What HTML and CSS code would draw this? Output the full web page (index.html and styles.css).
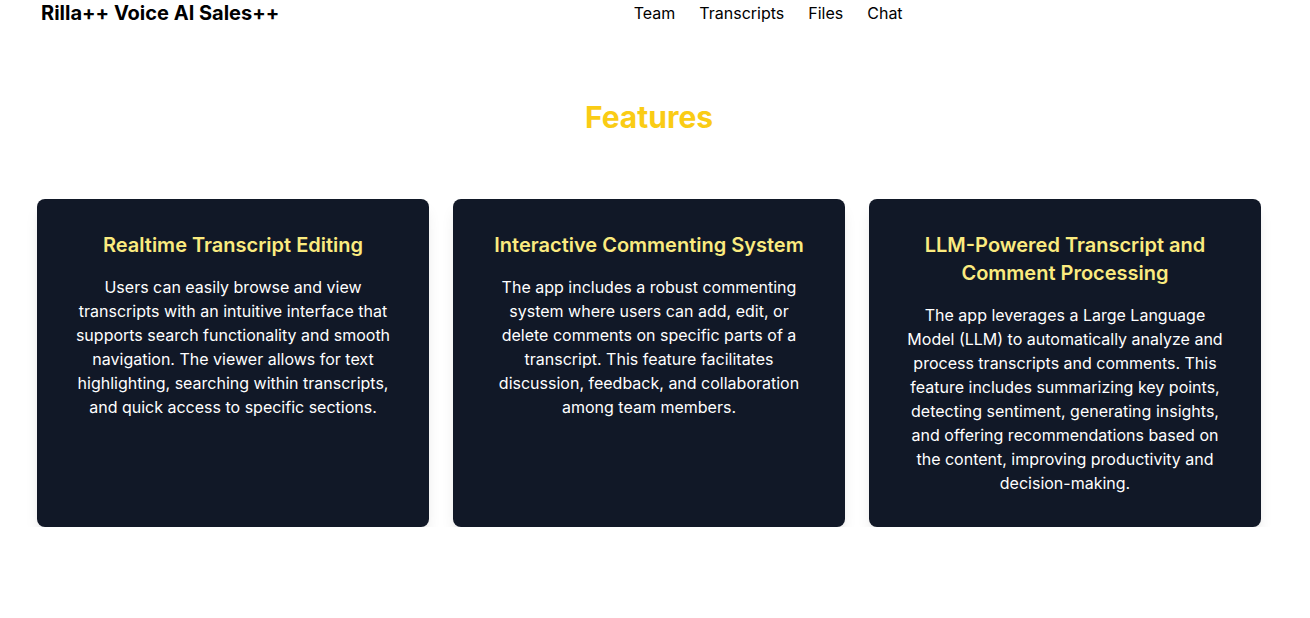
FILE: index.html
```html
<!DOCTYPE html>
<html lang="en">
<head>
<meta charset="utf-8">
<title>Rilla++ Voice AI Sales++</title>
<link rel="stylesheet" href="styles.css">
</head>
<body>
<div class="page">
  <header class="header">
    <div class="logo">Rilla++ Voice AI Sales++</div>
    <nav class="nav">
      <a href="#">Team</a>
      <a href="#">Transcripts</a>
      <a href="#">Files</a>
      <a href="#">Chat</a>
    </nav>
    <div class="spacer"></div>
  </header>
  <section class="features">
    <h2 class="features-title">Features</h2>
    <div class="grid">
      <div class="card">
        <h3 class="card-title">Realtime Transcript Editing</h3>
        <p class="card-text">Users can easily browse and view transcripts with an intuitive interface that supports search functionality and smooth navigation. The viewer allows for text highlighting, searching within transcripts, and quick access to specific sections.</p>
      </div>
      <div class="card">
        <h3 class="card-title">Interactive Commenting System</h3>
        <p class="card-text">The app includes a robust commenting system where users can add, edit, or delete comments on specific parts of a transcript. This feature facilitates discussion, feedback, and collaboration among team members.</p>
      </div>
      <div class="card">
        <h3 class="card-title">LLM-Powered Transcript and Comment Processing</h3>
        <p class="card-text">The app leverages a Large Language Model (LLM) to automatically analyze and process transcripts and comments. This feature includes summarizing key points, detecting sentiment, generating insights, and offering recommendations based on the content, improving productivity and decision-making.</p>
      </div>
    </div>
  </section>
</div>
</body>
</html>
```

FILE: styles.css
```css
* { box-sizing: border-box; }
html, body { margin: 0; padding: 0; background: #ffffff; }
body {
  font-family: Inter, "Noto Sans", "Liberation Sans", sans-serif;
  color: #000;
}
.page {
  width: 1224px;
  margin-left: 37px;
}
.header {
  display: flex;
  justify-content: space-between;
  align-items: center;
  padding: 0 4px;
  height: 26px;
}
.logo {
  font-size: 20px;
  line-height: 26px;
  font-weight: 700;
  color: #000;
}
.nav {
  display: flex;
  gap: 24px;
  font-size: 16px;
  line-height: 24px;
}
.nav a {
  color: #000;
  text-decoration: none;
}
.spacer { width: 0; }
.features {
  padding-top: 73px;
}
.features-title {
  margin: 0 0 64px;
  text-align: center;
  font-size: 30px;
  line-height: 36px;
  font-weight: 700;
  color: #facc15;
}
.grid {
  display: grid;
  grid-template-columns: repeat(3, 1fr);
  gap: 24px;
}
.card {
  background: #111827;
  border-radius: 8px;
  padding: 32px;
  text-align: center;
  box-shadow: 0 10px 15px -3px rgba(0,0,0,0.1), 0 4px 6px -4px rgba(0,0,0,0.1);
}
.card-title {
  margin: 0 0 16px;
  font-size: 20px;
  line-height: 28px;
  font-weight: 600;
  color: #fbeb7f;
}
.card-text {
  margin: 0;
  font-size: 16px;
  line-height: 24px;
  color: #ffffff;
}
```
